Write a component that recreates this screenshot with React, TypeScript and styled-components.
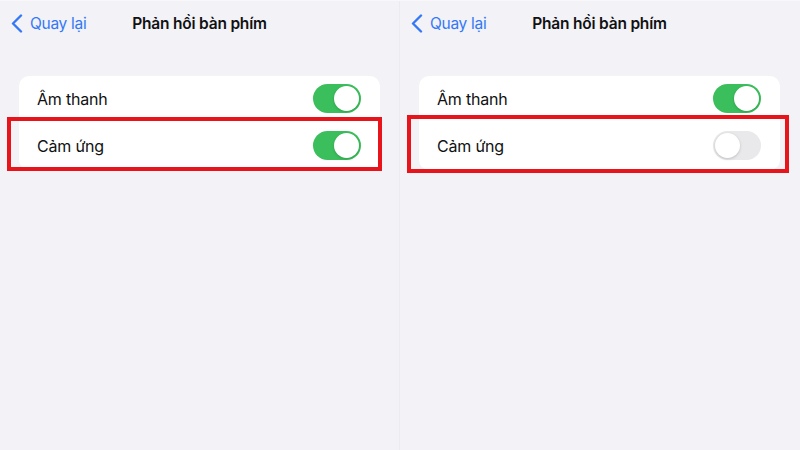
import React from 'react';
import styled, { createGlobalStyle } from 'styled-components';

const GlobalStyle = createGlobalStyle`
	html, body {
		margin: 0;
		padding: 0;
		background: #f2f2f7;
	}
	body {
		font-family: Inter, 'Noto Sans', 'Liberation Sans', sans-serif;
		-webkit-font-smoothing: antialiased;
	}
`;

type Highlight = { top: number; right: number; bottom: number; left: number };

type Screen = {
	haptic: boolean;
	highlight: Highlight;
};

const screens: Screen[] = [
	{ haptic: true, highlight: { top: -4, right: -2, bottom: -1, left: -12 } },
	{ haptic: false, highlight: { top: -6, right: -9, bottom: -3, left: -12 } },
];

const BackChevron = () => (
	<svg width="12" height="19" viewBox="0 0 12 19" fill="none">
		<polyline
			points="10,1.5 2,9.5 10,17.5"
			stroke="#3478f6"
			strokeWidth="2.4"
			strokeLinecap="round"
			strokeLinejoin="round"
		/>
	</svg>
);

const Toggle = ({ on }: { on: boolean }) => (
	<Track $on={on}>
		<Knob $on={on} />
	</Track>
);

const SettingsScreen = ({ screen, divider }: { screen: Screen; divider: boolean }) => (
	<Panel $divider={divider}>
		<NavBar>
			<BackButton>
				<BackChevron />
				<span>Quay lại</span>
			</BackButton>
			<NavTitle>Phản hồi bàn phím</NavTitle>
			<span />
		</NavBar>
		<Group>
			<Row $height={45}>
				<RowLabel>Âm thanh</RowLabel>
				<Toggle on />
			</Row>
			<Row $height={49}>
				<RowLabel>Cảm ứng</RowLabel>
				<Toggle on={screen.haptic} />
				<Marker $h={screen.highlight} />
			</Row>
		</Group>
	</Panel>
);

export default function App() {
	return (
		<>
			<GlobalStyle />
			<Page>
				{screens.map((s, i) => (
					<SettingsScreen key={i} screen={s} divider={i === 0} />
				))}
			</Page>
		</>
	);
}

const Page = styled.div`
	display: grid;
	grid-template-columns: 400px 400px;
	width: 800px;
	height: 450px;
	overflow: hidden;
	background: #f2f2f7;
	border-top: 1px solid #f8f8fb;
	box-sizing: border-box;
`;

const Panel = styled.section<{ $divider: boolean }>`
	display: flex;
	flex-direction: column;
	border-right: 1px solid ${(p) => (p.$divider ? '#ebebf0' : 'transparent')};
	box-sizing: border-box;
	width: 400px;
`;

const NavBar = styled.header`
	display: grid;
	grid-template-columns: 1fr auto 1fr;
	align-items: center;
	height: 44px;
	padding: 0 11px;
`;

const BackButton = styled.div`
	display: flex;
	align-items: center;
	gap: 7px;
	color: #3478f6;
	font-size: 15.5px;
	letter-spacing: -0.3px;
`;

const NavTitle = styled.h1`
	margin: 0;
	font-size: 15.5px;
	font-weight: 600;
	color: #111;
	letter-spacing: -0.2px;
`;

const Group = styled.div`
	margin: 31px 19px 0 19px;
	background: #fff;
	border-radius: 10px;
`;

const Row = styled.div<{ $height: number }>`
	position: relative;
	display: flex;
	align-items: center;
	justify-content: space-between;
	height: ${(p) => p.$height}px;
	padding: 0 19px 0 18px;
`;

const RowLabel = styled.span`
	font-size: 16px;
	color: #111;
	letter-spacing: -0.2px;
`;

const Track = styled.div<{ $on: boolean }>`
	position: relative;
	width: 48px;
	height: 29px;
	border-radius: 15px;
	background: ${(p) => (p.$on ? '#3bbf5c' : '#e9e9eb')};
`;

const Knob = styled.div<{ $on: boolean }>`
	position: absolute;
	top: 2px;
	left: ${(p) => (p.$on ? '21px' : '2px')};
	width: 25px;
	height: 25px;
	border-radius: 50%;
	background: #fff;
	box-shadow: 0 1px 3px rgba(0, 0, 0, 0.18);
`;

const Marker = styled.div<{ $h: Highlight }>`
	position: absolute;
	top: ${(p) => p.$h.top}px;
	right: ${(p) => p.$h.right}px;
	bottom: ${(p) => p.$h.bottom}px;
	left: ${(p) => p.$h.left}px;
	border: 4px solid #e8141b;
	pointer-events: none;
`;
